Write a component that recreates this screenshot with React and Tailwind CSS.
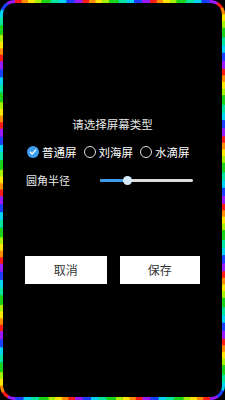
import React from "react";

const segs = [
  ["#ff1a1a", 0, 10.5],
  ["#ff8c00", 10.5, 9.5],
  ["#ffe600", 20, 10],
  ["#a6f000", 30, 10],
  ["#19d219", 40, 14],
  ["#00e6a0", 54, 12],
  ["#00d4f5", 66, 11],
  ["#1a3dff", 77, 12],
  ["#9a1aff", 89, 11],
];

const D =
  "M14.5 1.5 H210.5 A13 13 0 0 1 223.5 14.5 V385.5 A13 13 0 0 1 210.5 398.5 H14.5 A13 13 0 0 1 1.5 385.5 V14.5 A13 13 0 0 1 14.5 1.5 Z";

function Frame() {
  return (
    <svg
      className="absolute inset-0 pointer-events-none"
      width="225"
      height="400"
      viewBox="0 0 225 400"
    >
      {segs.map(([c, s, l]) => (
        <path
          key={c}
          d={D}
          fill="none"
          stroke={c}
          strokeWidth="3"
          pathLength="1800"
          strokeDasharray={`${l + 0.6} ${100 - l - 0.6}`}
          strokeDashoffset={-s}
        />
      ))}
    </svg>
  );
}

function Radio({ checked, label, className = "" }) {
  return (
    <div className={`flex items-center ${className}`}>
      {checked ? (
        <span className="w-[12px] h-[12px] rounded-full bg-[#3d9df0] flex items-center justify-center">
          <svg width="8" height="8" viewBox="0 0 8 8">
            <path d="M1.3 4.2 L3.2 6 L6.8 1.9" fill="none" stroke="white" strokeWidth="1.3" strokeLinecap="round" strokeLinejoin="round" />
          </svg>
        </span>
      ) : (
        <span className="w-[12px] h-[12px] rounded-full border border-[#e0e0e0] box-border" />
      )}
      <span className="ml-[3px] text-[11.5px] leading-[16px] text-white">{label}</span>
    </div>
  );
}

export default function App() {
  return (
    <div
      className="relative w-[225px] h-[400px] bg-black overflow-hidden"
      style={{ fontFamily: '"Noto Sans CJK SC", "Noto Sans", sans-serif' }}
    >
      <Frame />
      <div className="flex flex-col pt-[116px] px-[25px]">
        <p className="text-center text-[11.5px] leading-[16px] text-[#e8e8e8]">请选择屏幕类型</p>
        <div className="mt-[12px] flex items-center h-[16px] pl-[2px]">
          <Radio checked label="普通屏" />
          <Radio label="刘海屏" className="ml-[7px]" />
          <Radio label="水滴屏" className="ml-[7px]" />
        </div>
        <div className="mt-[12px] flex items-center h-[16px] pl-[1px]">
          <span className="text-[11px] leading-[16px] text-[#e8e8e8]">圆角半径</span>
          <div className="relative ml-[30px] w-[93px] h-[3px] rounded-full bg-[#dcdcdc]">
            <div className="absolute left-0 top-0 h-[3px] w-[28px] rounded-full bg-[#3d9be9]" />
            <div className="absolute left-[23px] top-[-3px] w-[9px] h-[9px] rounded-full bg-[#d8ebfa]" />
          </div>
        </div>
        <div className="mt-[68px] flex gap-[13px]">
          <button className="w-[82px] h-[28px] bg-white text-[12px] text-[#333] flex items-center justify-center">取消</button>
          <button className="w-[81px] h-[28px] bg-white text-[12px] text-[#333] flex items-center justify-center">保存</button>
        </div>
      </div>
    </div>
  );
}
